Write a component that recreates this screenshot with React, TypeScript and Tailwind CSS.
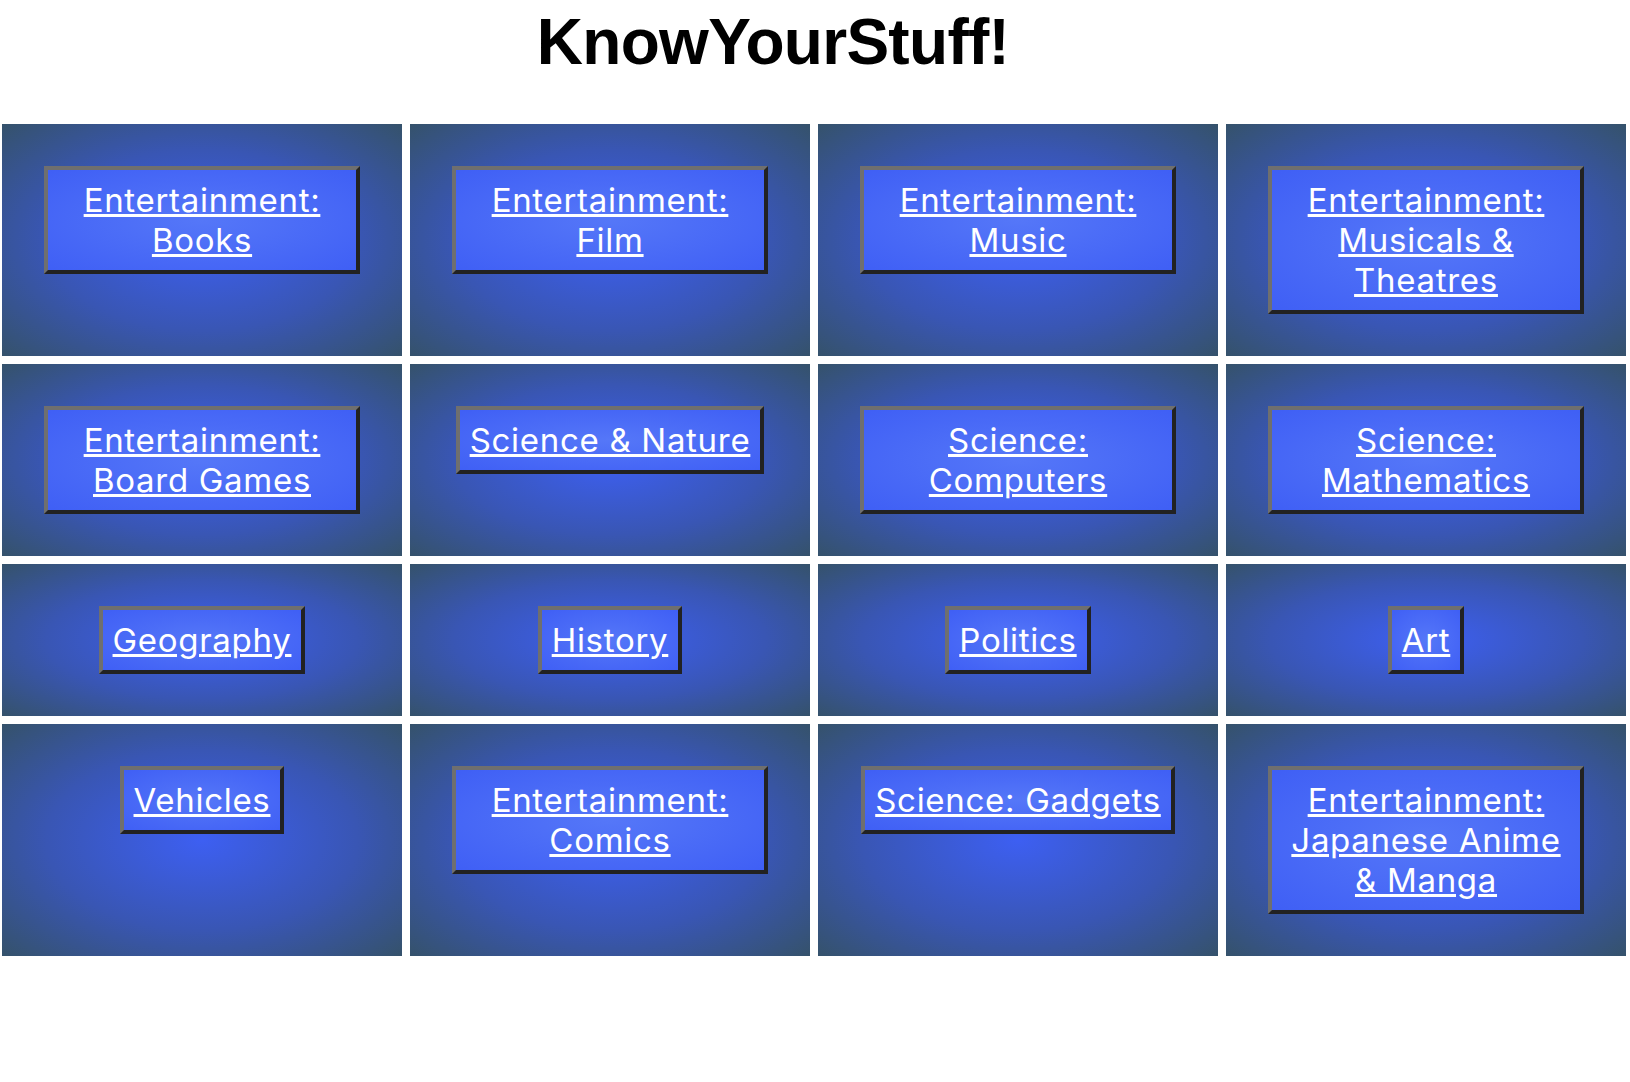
import React from 'react';

type Category = {
  id: number;
  name: string;
};

const categories: Category[] = [
  { id: 10, name: 'Entertainment: Books' },
  { id: 11, name: 'Entertainment: Film' },
  { id: 12, name: 'Entertainment: Music' },
  { id: 13, name: 'Entertainment: Musicals & Theatres' },
  { id: 16, name: 'Entertainment: Board Games' },
  { id: 17, name: 'Science & Nature' },
  { id: 18, name: 'Science: Computers' },
  { id: 19, name: 'Science: Mathematics' },
  { id: 22, name: 'Geography' },
  { id: 23, name: 'History' },
  { id: 24, name: 'Politics' },
  { id: 25, name: 'Art' },
  { id: 28, name: 'Vehicles' },
  { id: 29, name: 'Entertainment: Comics' },
  { id: 30, name: 'Science: Gadgets' },
  { id: 31, name: 'Entertainment: Japanese Anime & Manga' },
];

function CategoryCard({ category }: { category: Category }) {
  return (
    <div className="flex flex-col items-center p-[42px] bg-[radial-gradient(ellipse_at_center,#3d5ff2_0%,#3956b4_55%,#35526b_100%)]">
      <a
        href="#"
        className="block px-[10px] py-[10px] border-4 border-solid border-t-[#6f6f6f] border-l-[#6f6f6f] border-r-[#222] border-b-[#222] bg-[radial-gradient(ellipse_at_center,#5577f8_0%,#3f5ff5_100%)] text-center text-white underline text-[33px] leading-[40px] tracking-[0.7px]"
        style={{ fontFamily: 'Inter, "Noto Sans", sans-serif' }}
      >
        {category.name}
      </a>
    </div>
  );
}

function App() {
  return (
    <div className="min-h-[1082px] bg-white">
      <div className="h-[124px] pt-[10px] pr-[84px] text-center">
        <h1
          className="text-[64px] leading-[64px] font-bold tracking-[-0.7px] text-black"
          style={{ fontFamily: '"Liberation Sans", Arial, sans-serif' }}
        >
          KnowYourStuff!
        </h1>
      </div>
      <div className="ml-[2px] w-[1624px] grid grid-cols-4 gap-2">
        {categories.map((category) => (
          <CategoryCard key={category.id} category={category} />
        ))}
      </div>
    </div>
  );
}

export default App;
